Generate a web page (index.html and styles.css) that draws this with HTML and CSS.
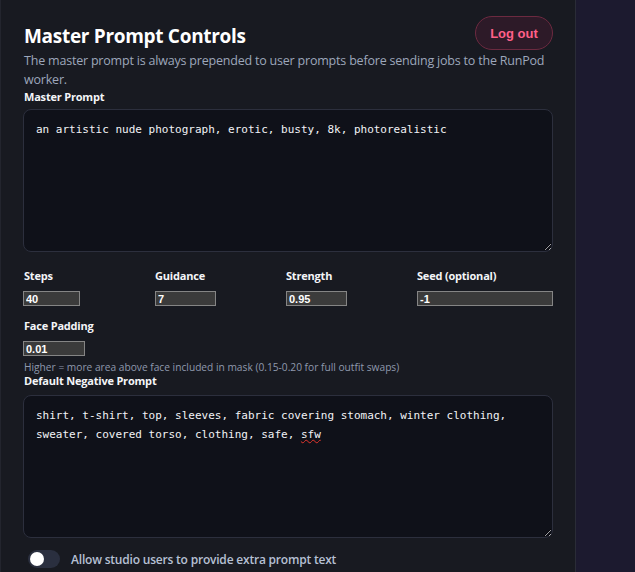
FILE: index.html
```html
<!DOCTYPE html>
<html lang="en">
<head>
<meta charset="utf-8">
<title>Master Prompt Controls</title>
<link rel="stylesheet" href="styles.css">
</head>
<body>
<div class="layout">
  <section class="card">
    <header class="card-head">
      <h1 class="title">Master Prompt Controls</h1>
      <button class="logout" type="button">Log out</button>
    </header>
    <p class="desc">The master prompt is always prepended to user prompts before sending jobs to the RunPod worker.</p>

    <label class="field-label">Master Prompt</label>
    <div class="prompt-box">an artistic nude photograph, erotic, busty, 8k, photorealistic</div>

    <div class="params">
      <div class="field">
        <label class="field-label">Steps</label>
        <input class="num w57" type="text" value="40">
      </div>
      <div class="field">
        <label class="field-label">Guidance</label>
        <input class="num w61" type="text" value="7">
      </div>
      <div class="field">
        <label class="field-label">Strength</label>
        <input class="num w61" type="text" value="0.95">
      </div>
      <div class="field">
        <label class="field-label">Seed (optional)</label>
        <input class="num wfull" type="text" value="-1">
      </div>
    </div>

    <div class="field face">
      <label class="field-label">Face Padding</label>
      <input class="num w62" type="text" value="0.01">
    </div>
    <p class="hint">Higher = more area above face included in mask (0.15-0.20 for full outfit swaps)</p>

    <label class="field-label neg-label">Default Negative Prompt</label>
    <div class="prompt-box">shirt, t-shirt, top, sleeves, fabric covering stomach, winter clothing, sweater, covered torso, clothing, safe, <span class="spell">sfw</span></div>

    <div class="toggle-row">
      <span class="switch"><span class="knob"></span></span>
      <span class="toggle-text">Allow studio users to provide extra prompt text</span>
    </div>
  </section>
  <aside class="side"></aside>
</div>
</body>
</html>
```

FILE: styles.css
```css
* { box-sizing: border-box; }

html, body {
  margin: 0;
  padding: 0;
  height: 100%;
  background: #1c1a2e;
  overflow: hidden;
}

.layout {
  display: flex;
  height: 572px;
}

.card {
  width: 576px;
  flex: none;
  background: #181a21;
  border-left: 1px solid #23252e;
  border-right: 1px solid #2a2c37;
  padding: 16px 22px 0 22px;
  font-family: "Open Sans", "Noto Sans", sans-serif;
  color: #f2f3f7;
}

.side {
  flex: 1;
  background: #1c1a2f;
}

.card-head {
  display: flex;
  justify-content: space-between;
  align-items: flex-start;
  height: 34px;
}

.title {
  margin: 8px 0 0 1px;
  font-size: 19px;
  line-height: 24px;
  font-weight: 700;
  letter-spacing: -0.3px;
  color: #ffffff;
}

.logout {
  width: 78px;
  height: 34px;
  border-radius: 17px;
  background: #2d1a28;
  border: 1px solid #6c2a40;
  color: #ff6088;
  font-family: "Liberation Sans", Arial, sans-serif;
  font-weight: 700;
  font-size: 13px;
  padding: 0;
}

.desc {
  margin: 1px 0 0 1px;
  font-size: 12.5px;
  line-height: 19px;
  letter-spacing: -0.2px;
  color: #9da7bb;
}

.field-label {
  display: block;
  margin: 0 0 4px 1px;
  font-size: 11px;
  line-height: 16px;
  font-weight: 700;
  letter-spacing: -0.2px;
  color: #f4f5f8;
}

.neg-label { margin-bottom: 6px; }

.prompt-box {
  height: 143px;
  background: #0f1119;
  border: 1px solid #2c2f3d;
  border-radius: 8px;
  padding: 10px 12px;
  font-family: "DejaVu Sans Mono", "Liberation Mono", monospace;
  font-size: 11px;
  line-height: 19px;
  color: #f2f3f6;
  white-space: pre-wrap;
  overflow: auto;
  resize: vertical;
}

.spell {
  text-decoration: underline wavy #e0342c;
  text-decoration-thickness: 1px;
}

.params {
  display: grid;
  grid-template-columns: 120px 119px 119px 1fr;
  column-gap: 12px;
  margin-top: 16px;
}

.params .field-label { margin-left: 0; }
.params .field:first-child .field-label { margin-left: 1px; }

.field {
  display: flex;
  flex-direction: column;
  align-items: flex-start;
}

.field .field-label { margin-bottom: 7px; }

.num {
  height: 15px;
  background: #3b3b3b;
  border: 1px solid #858585;
  border-radius: 0;
  padding: 0 2px;
  color: #ffffff;
  font-family: "Liberation Sans", Arial, sans-serif;
  font-size: 11px;
  font-weight: 700;
  outline: none;
}

.w57 { width: 57px; }
.w61 { width: 61px; }
.w62 { width: 62px; }
.wfull { width: 100%; }

.face { margin-top: 12px; }

.hint {
  margin: 5px 0 0 1px;
  font-size: 10.2px;
  line-height: 12px;
  color: #8f99ad;
}

.toggle-row {
  display: flex;
  align-items: center;
  gap: 11px;
  margin: 12px 0 0 5px;
}

.switch {
  width: 32px;
  height: 18px;
  border-radius: 9px;
  background: #2a2f3f;
  display: flex;
  align-items: center;
  padding: 0 2px;
}

.knob {
  width: 14px;
  height: 14px;
  border-radius: 50%;
  background: #ffffff;
}

.toggle-text {
  font-size: 12px;
  font-weight: 600;
  letter-spacing: -0.2px;
  color: #b6c0d4;
}
```
